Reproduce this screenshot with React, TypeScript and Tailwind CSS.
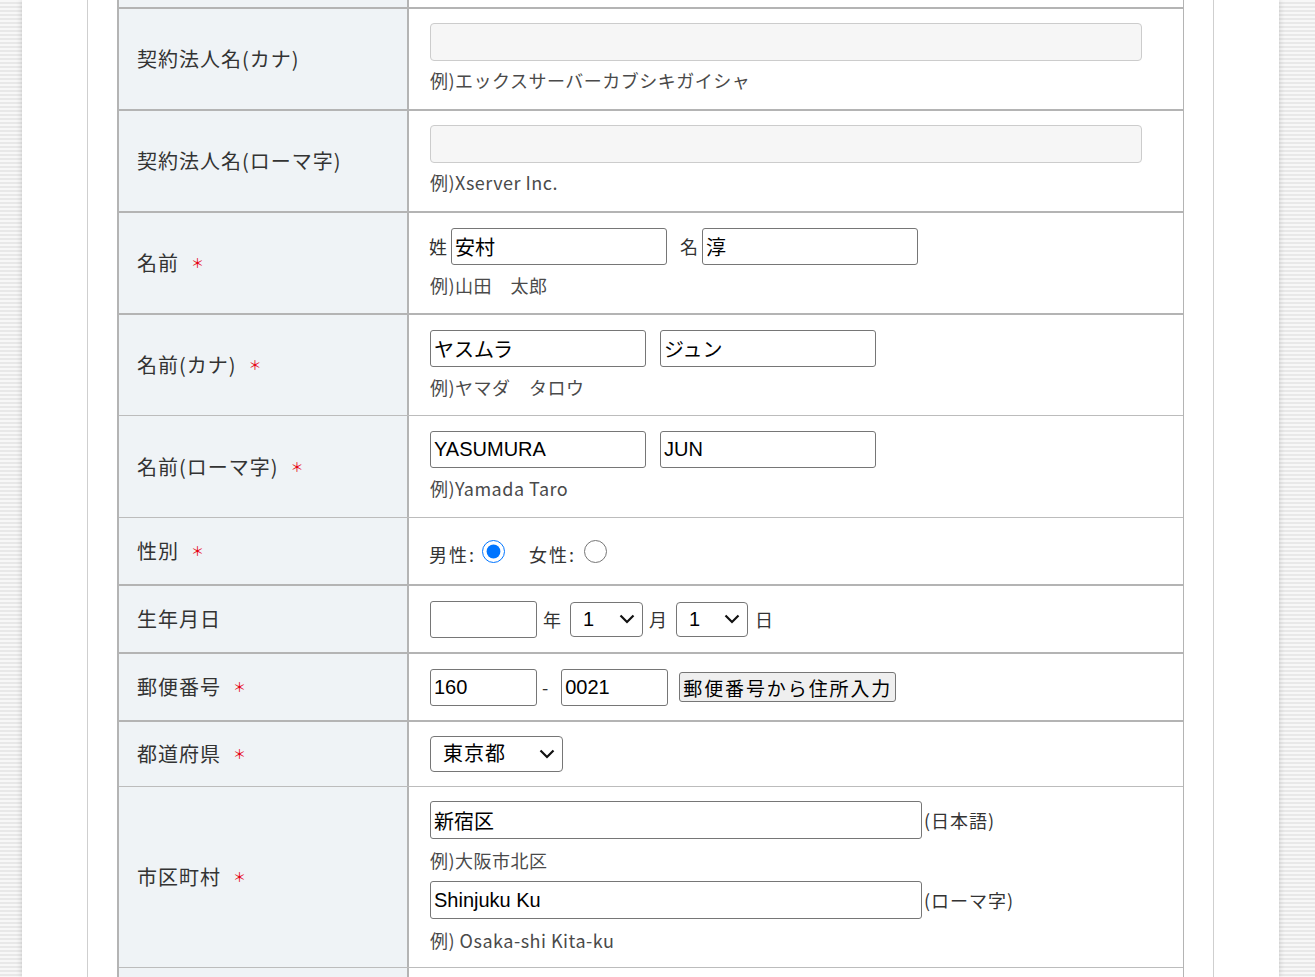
import React from 'react'

const jp = "font-['Noto_Sans_CJK_JP','Noto_Sans',sans-serif]"
const inputFont = "font-['Liberation_Sans','Noto_Sans_CJK_JP',sans-serif]"

const Req = () => <span className="ml-3 text-[13px] text-[#e60012]">＊</span>

const Hint = ({ children }: { children: React.ReactNode }) => (
  <p className="text-[18px] leading-[26px] text-[#4a4a4a] tracking-[0.5px]">{children}</p>
)

const TextBox = ({ value = '', w = 'w-[216px]', h = 'h-[37px]' }: { value?: string; w?: string; h?: string }) => (
  <input
    type="text"
    defaultValue={value}
    className={`${w} ${h} ${inputFont} rounded-[3px] border border-[#767676] bg-white px-[3px] text-[20px] text-black outline-none`}
  />
)

const Chevron = () => (
  <svg
    className="pointer-events-none absolute right-[8px] top-1/2 -translate-y-1/2"
    width="16"
    height="10"
    viewBox="0 0 16 10"
    fill="none"
    stroke="#111"
    strokeWidth="2.2"
  >
    <path d="M1.5 1.5 L8 8 L14.5 1.5" />
  </svg>
)

const Select = ({ value, w, h = 'h-[35px]', pl = 'pl-[12px]' }: { value: string; w: string; h?: string; pl?: string }) => (
  <div className={`relative ${w}`}>
    <select
      defaultValue={value}
      className={`${h} w-full appearance-none ${inputFont} rounded-[4px] border border-[#767676] bg-white ${pl} text-[20px] tracking-[1px] text-black`}
    >
      <option>{value}</option>
    </select>
    <Chevron />
  </div>
)

interface RowProps {
  label: React.ReactNode
  required?: boolean
  h: string
  border: string
  children?: React.ReactNode
}

const Row = ({ label, required, h, border, children }: RowProps) => (
  <div className={`grid grid-cols-[290px_1fr] ${border}`}>
    <div className={`${h} flex items-center border-r-2 border-[#b4b4b4] bg-[#eff3f6] pl-[18px] text-[20px] tracking-[1px] text-[#333]`}>
      {label}
      {required && <Req />}
    </div>
    <div className={`${h} flex flex-col justify-center pl-[21px]`}>{children}</div>
  </div>
)

const thick = 'border-b-2 border-[#b4b4b4]'
const thin = 'border-b border-[#bcbcbc]'

export default function App() {
  return (
    <div className={`min-h-screen w-full overflow-hidden bg-[repeating-linear-gradient(180deg,#f7f7f7_0px,#f7f7f7_2px,#e8e8e8_2px,#e8e8e8_4px)] ${jp}`}>
      <div className="ml-[22px] h-[977px] w-[1257px] bg-white shadow-[0_0_6px_rgba(0,0,0,0.18)]">
        <div className="ml-[65px] h-full w-[1127px] border-x border-[#cfcfcf] px-[29px]">
          <div className="border-l-2 border-r border-[#b4b4b4]">
            <Row label="" h="h-[7px]" border={thick} />

            <Row label="契約法人名(カナ)" h="h-[100px]" border={thick}>
              <input className="-mt-[2px] h-[38px] w-[712px] rounded-[4px] border border-[#cccccc] bg-[#f6f6f6]" disabled />
              <div className="mt-[6px]">
                <Hint>例)エックスサーバーカブシキガイシャ</Hint>
              </div>
            </Row>

            <Row label="契約法人名(ローマ字)" h="h-[100px]" border={thick}>
              <input className="-mt-[2px] h-[38px] w-[712px] rounded-[4px] border border-[#cccccc] bg-[#f6f6f6]" disabled />
              <div className="mt-[6px]">
                <Hint>例)Xserver Inc.</Hint>
              </div>
            </Row>

            <Row label="名前" required h="h-[100px]" border={thick}>
              <div className="-mt-[1px] flex items-center text-[18px] text-[#333]">
                <span className="mr-[4px] -ml-px">姓</span>
                <TextBox value="安村" />
                <span className="ml-[13px] mr-[4px]">名</span>
                <TextBox value="淳" />
              </div>
              <div className="mt-[7px]">
                <Hint>例)山田　太郎</Hint>
              </div>
            </Row>

            <Row label="名前(カナ)" required h="h-[100px]" border={thin}>
              <div className="-mt-[1px] flex items-center gap-[14px]">
                <TextBox value="ヤスムラ" />
                <TextBox value="ジュン" />
              </div>
              <div className="mt-[7px]">
                <Hint>例)ヤマダ　タロウ</Hint>
              </div>
            </Row>

            <Row label="名前(ローマ字)" required h="h-[101px]" border={thin}>
              <div className="-mt-[1px] flex items-center gap-[14px]">
                <TextBox value="YASUMURA" />
                <TextBox value="JUN" />
              </div>
              <div className="mt-[7px]">
                <Hint>例)Yamada Taro</Hint>
              </div>
            </Row>

            <Row label="性別" required h="h-[66px]" border={thick}>
              <div className="flex items-center text-[18px] tracking-[2px] text-[#333]">
                <span className="-ml-px mt-[6px]">男性:</span>
                <input type="radio" name="sex" defaultChecked className="m-0 ml-[6px] h-[23px] w-[23px]" />
                <span className="ml-[24px] mt-[6px]">女性:</span>
                <input type="radio" name="sex" className="m-0 ml-[8px] h-[23px] w-[23px]" />
              </div>
            </Row>

            <Row label="生年月日" h="h-[66px]" border={thick}>
              <div className="flex items-center text-[18px] text-[#333]">
                <TextBox w="w-[107px]" />
                <span className="ml-[6px] mr-[9px]">年</span>
                <Select value="1" w="w-[73px]" />
                <span className="ml-[6px] mr-[9px]">月</span>
                <Select value="1" w="w-[72px]" />
                <span className="ml-[7px]">日</span>
              </div>
            </Row>

            <Row label="郵便番号" required h="h-[66px]" border={thick}>
              <div className="flex items-center text-[18px] text-[#333]">
                <TextBox value="160" w="w-[107px]" />
                <span className="ml-[5px] mr-[13px]">-</span>
                <TextBox value="0021" w="w-[107px]" />
                <button className="ml-[11px] h-[30px] rounded-[3px] border border-[#767676] bg-[#efefef] px-[3px] text-[19px] leading-none tracking-[1.9px] text-black">
                  郵便番号から住所入力
                </button>
              </div>
            </Row>

            <Row label="都道府県" required h="h-[64px]" border={thin}>
              <div className="flex items-center">
                <div className={jp}>
                  <Select value="東京都" w="w-[133px]" h="h-[36px]" pl="pl-[12px]" />
                </div>
              </div>
            </Row>

            <Row label="市区町村" required h="h-[180px]" border={thin}>
              <div className="flex items-center text-[18px] text-[#333]">
                <TextBox value="新宿区" w="w-[492px]" h="h-[38px]" />
                <span className="ml-[2px] tracking-[1px]">(日本語)</span>
              </div>
              <div className="mt-[8px]">
                <Hint>例)大阪市北区</Hint>
              </div>
              <div className="mt-[8px] flex items-center text-[18px] text-[#333]">
                <TextBox value="Shinjuku Ku" w="w-[492px]" h="h-[38px]" />
                <span className="ml-[2px] tracking-[1px]">(ローマ字)</span>
              </div>
              <div className="mt-[8px]">
                <Hint>例) Osaka-shi Kita-ku</Hint>
              </div>
            </Row>

            <Row label="" h="h-[20px]" border="" />
          </div>
        </div>
      </div>
    </div>
  )
}
